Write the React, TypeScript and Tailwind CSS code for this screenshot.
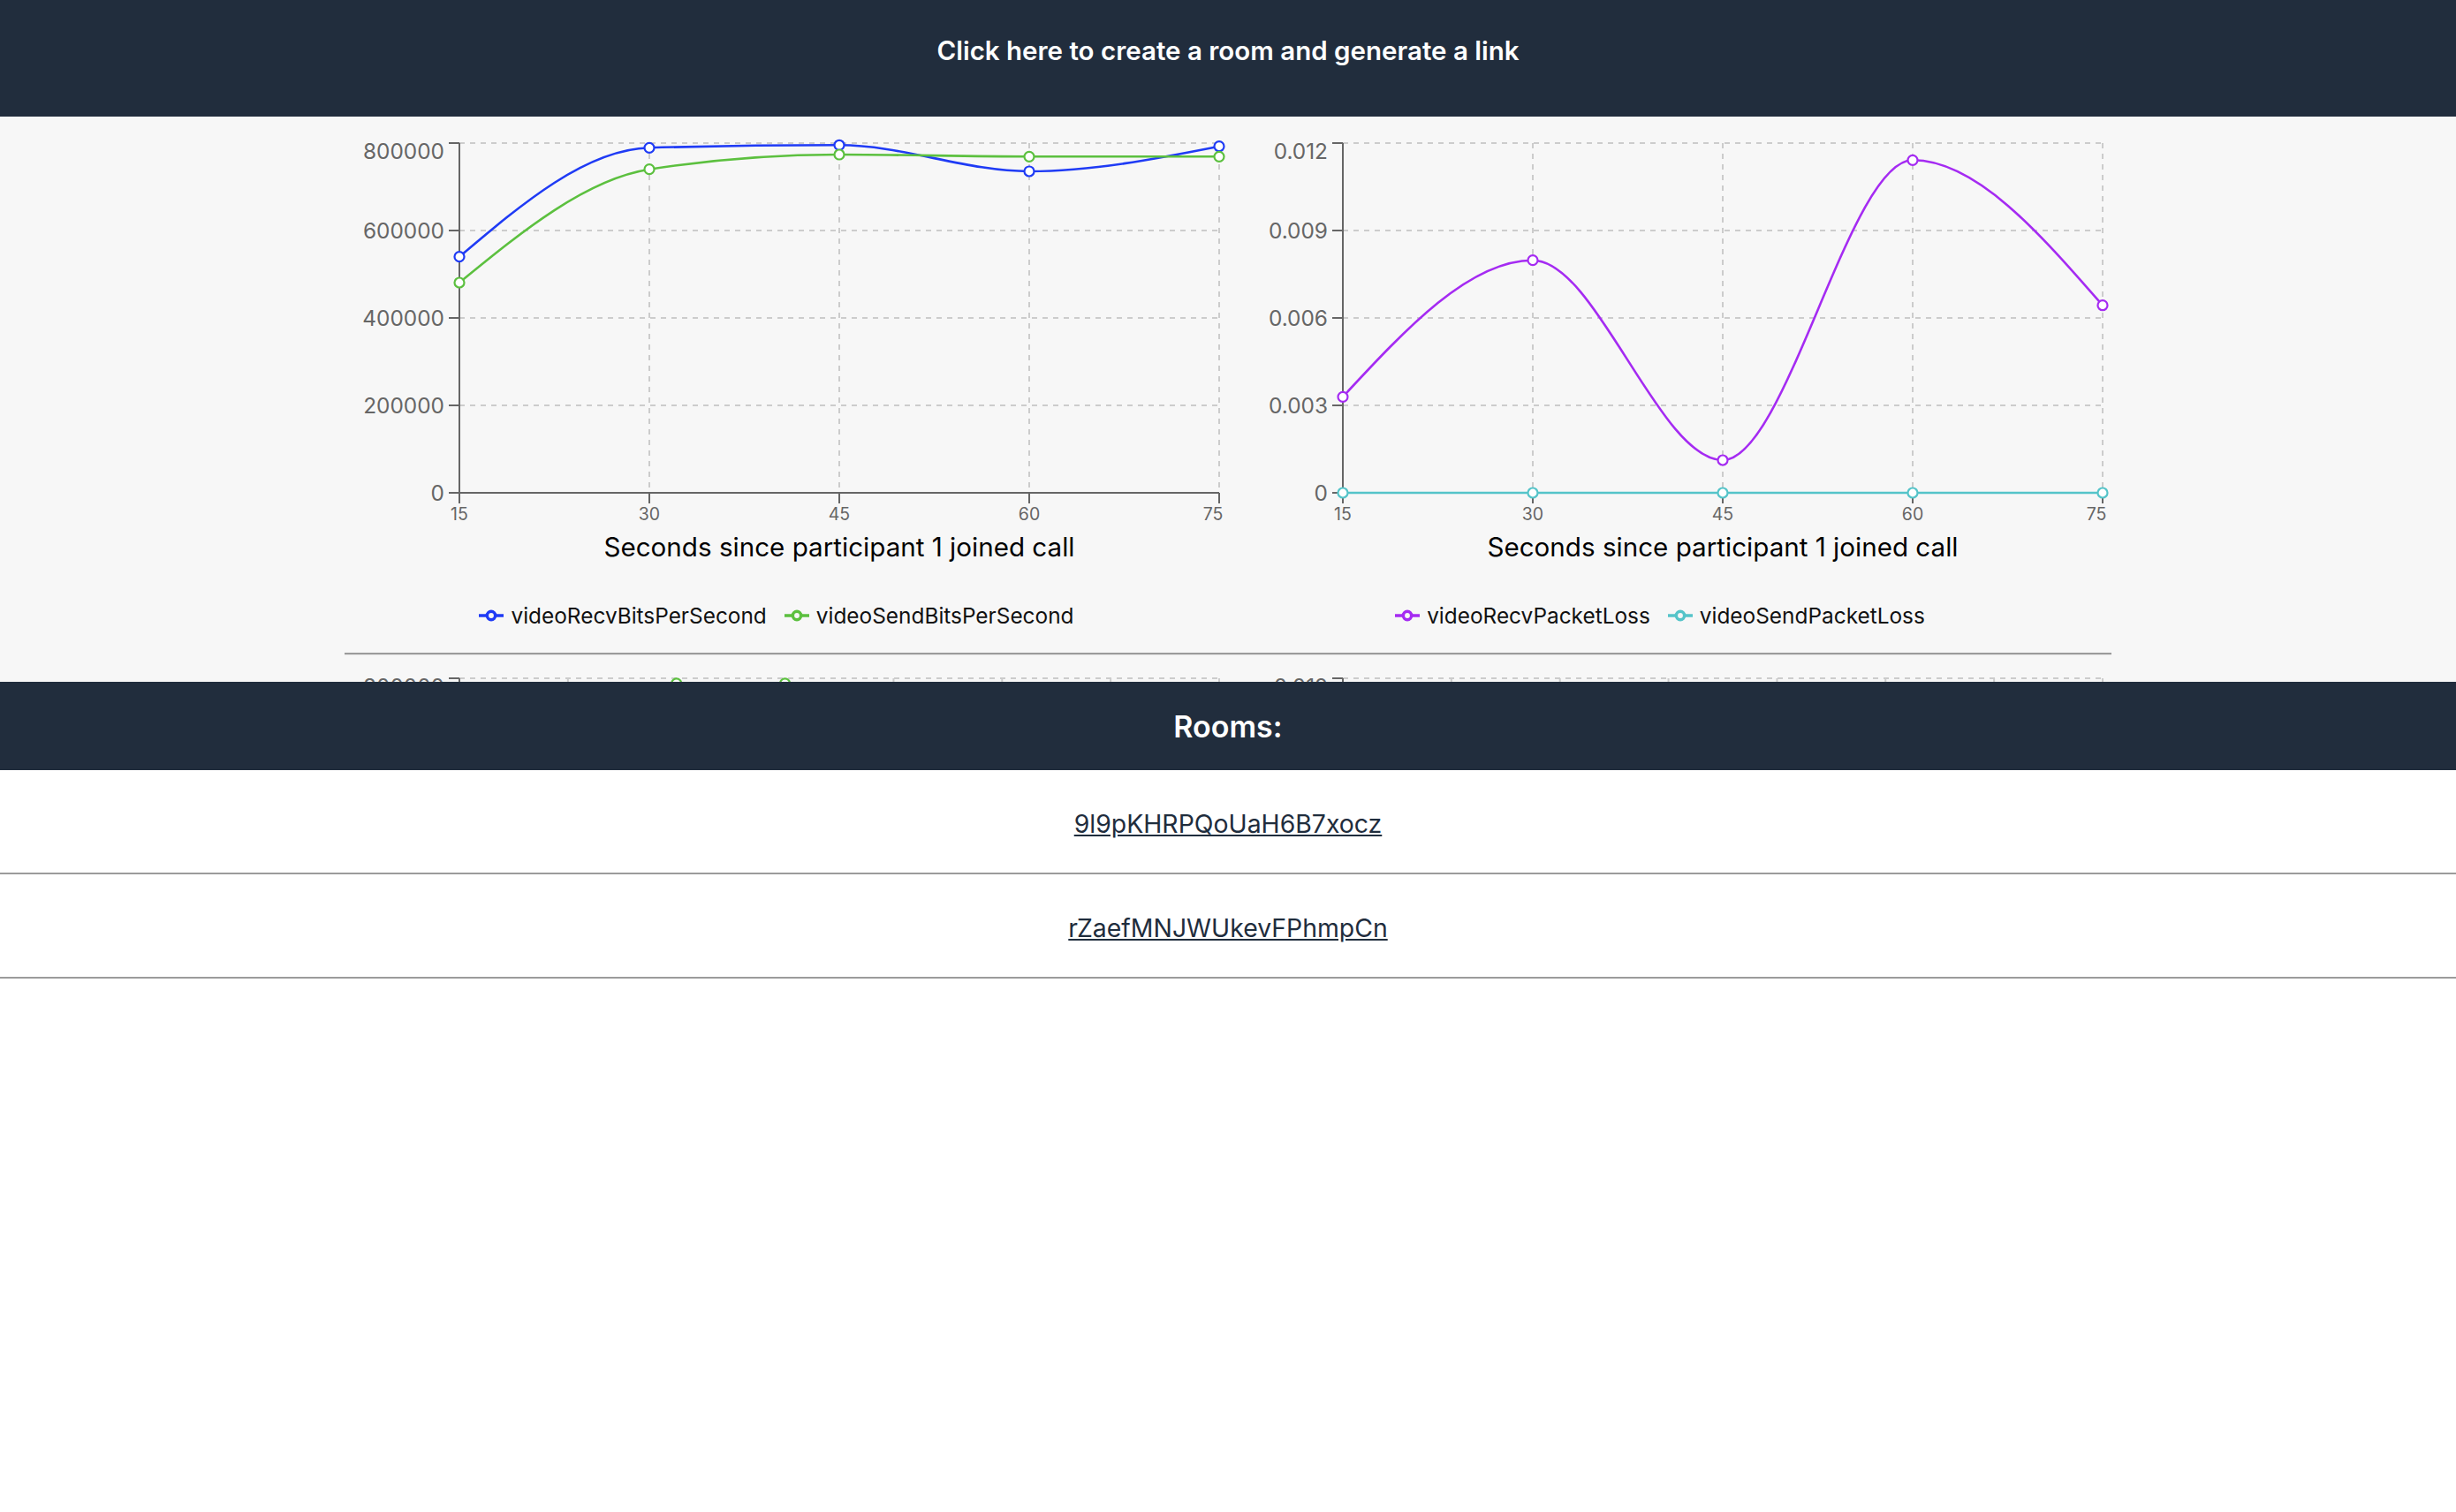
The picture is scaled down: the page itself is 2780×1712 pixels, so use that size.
import React from "react";

type Series = { name: string; color: string; values: number[] };
type ChartDef = {
  xLabels: string[];
  yLabels: string[];
  max: number;
  series: Series[];
};

const W = 1000;
const H = 539;
const PL = 130;
const PR = 990;
const PT = 20;
const PB = 416;

function monotonePath(pts: [number, number][]): string {
  const n = pts.length;
  if (n < 2) return "";
  if (n === 2) return `M${pts[0][0]},${pts[0][1]}L${pts[1][0]},${pts[1][1]}`;
  const secant: number[] = [];
  for (let i = 0; i < n - 1; i++) {
    const h = pts[i + 1][0] - pts[i][0];
    secant.push((pts[i + 1][1] - pts[i][1]) / h);
  }
  const sg = (x: number) => (x < 0 ? -1 : 1);
  const t: number[] = new Array(n).fill(0);
  for (let i = 1; i < n - 1; i++) {
    const h0 = pts[i][0] - pts[i - 1][0];
    const h1 = pts[i + 1][0] - pts[i][0];
    const s0 = secant[i - 1];
    const s1 = secant[i];
    const p = (s0 * h1 + s1 * h0) / (h0 + h1);
    t[i] = (sg(s0) + sg(s1)) * Math.min(Math.abs(s0), Math.abs(s1), 0.5 * Math.abs(p)) || 0;
  }
  t[0] = (3 * secant[0] - t[1]) / 2;
  t[n - 1] = (3 * secant[n - 2] - t[n - 2]) / 2;
  let d = `M${pts[0][0]},${pts[0][1]}`;
  for (let i = 0; i < n - 1; i++) {
    const [x0, y0] = pts[i];
    const [x1, y1] = pts[i + 1];
    const dx = (x1 - x0) / 3;
    d += `C${x0 + dx},${y0 + dx * t[i]},${x1 - dx},${y1 - dx * t[i + 1]},${x1},${y1}`;
  }
  return d;
}

function LegendIcon({ color }: { color: string }) {
  return (
    <svg width="28" height="28" viewBox="0 0 32 32" className="mr-[8px] shrink-0">
      <path
        strokeWidth="4"
        fill="none"
        stroke={color}
        d="M0,16h10.666666666666666A5.333333333333333,5.333333333333333,0,1,1,21.333333333333332,16H32M21.333333333333332,16A5.333333333333333,5.333333333333333,0,1,1,10.666666666666666,16"
      />
    </svg>
  );
}

function Chart({ def }: { def: ChartDef }) {
  const n = def.xLabels.length;
  const xAt = (i: number) => PL + (i * (PR - PL)) / (n - 1);
  const yAt = (v: number) => PB - (v / def.max) * (PB - PT);
  const yTicks = def.yLabels.map((_, k) => PB - (k * (PB - PT)) / (def.yLabels.length - 1));
  return (
    <div className="w-[1000px] flex flex-col">
      <svg width={W} height={H} fontFamily="Inter, 'Noto Sans', sans-serif" className="block">
        {yTicks.map((y, k) => (
          <line key={"hg" + k} x1={PL} x2={PR} y1={y} y2={y} stroke="#cccccc" strokeWidth="2" strokeDasharray="6 6" />
        ))}
        {def.xLabels.map((_, i) => (
          <line key={"vg" + i} x1={xAt(i)} x2={xAt(i)} y1={PT} y2={PB} stroke="#cccccc" strokeWidth="2" strokeDasharray="6 6" />
        ))}
        <line x1={PL} x2={PL} y1={PT} y2={PB} stroke="#666666" strokeWidth="2" />
        <line x1={PL} x2={PR} y1={PB} y2={PB} stroke="#666666" strokeWidth="2" />
        {yTicks.map((y, k) => (
          <g key={"yt" + k}>
            <line x1={PL - 12} x2={PL} y1={y} y2={y} stroke="#666666" strokeWidth="2" />
            <text
              x={PL - 17}
              y={k === yTicks.length - 1 ? y + 17.5 : y + 8.5}
              textAnchor="end"
              fill="#666666"
              fontSize="24.4"
            >
              {def.yLabels[k]}
            </text>
          </g>
        ))}
        {def.xLabels.map((lab, i) => (
          <g key={"xt" + i}>
            <line x1={xAt(i)} x2={xAt(i)} y1={PB} y2={PB + 12} stroke="#666666" strokeWidth="2" />
            <text
              x={i === n - 1 ? xAt(i) - 7 : xAt(i)}
              y={447}
              textAnchor="middle"
              fill="#666666"
              fontSize="19.5"
            >
              {lab}
            </text>
          </g>
        ))}
        <text x={(PL + PR) / 2} y={488} textAnchor="middle" fill="#000000" fontSize="29.6">
          Seconds since participant 1 joined call
        </text>
        {def.series.map((s) => {
          const pts: [number, number][] = s.values.map((v, i) => [xAt(i), yAt(v)]);
          return (
            <g key={s.name}>
              <path d={monotonePath(pts)} fill="none" stroke={s.color} strokeWidth="2.6" />
              {pts.map(([x, y], i) => (
                <circle key={i} cx={x} cy={y} r="5.5" fill="#ffffff" stroke={s.color} strokeWidth="2.2" />
              ))}
            </g>
          );
        })}
      </svg>
      <div className="h-[32px] flex items-center justify-center gap-[20px] pr-[22px]">
        {def.series.map((s) => (
          <div key={s.name} className="flex items-center">
            <LegendIcon color={s.color} />
            <span className="text-[24.4px] leading-[32px] text-[#111111]">{s.name}</span>
          </div>
        ))}
      </div>
    </div>
  );
}

const BLUE = "#1f3bf5";
const GREEN = "#5cc03f";
const PURPLE = "#a52bf2";
const TEAL = "#55c4c9";

const bitsLabels = ["0", "200000", "400000", "600000", "800000"];
const lossLabels = ["0", "0.003", "0.006", "0.009", "0.012"];

const row1: ChartDef[] = [
  {
    xLabels: ["15", "30", "45", "60", "75"],
    yLabels: bitsLabels,
    max: 800000,
    series: [
      { name: "videoRecvBitsPerSecond", color: BLUE, values: [540000, 789300, 795400, 735400, 792500] },
      { name: "videoSendBitsPerSecond", color: GREEN, values: [480800, 740000, 773700, 769100, 769100] },
    ],
  },
  {
    xLabels: ["15", "30", "45", "60", "75"],
    yLabels: lossLabels,
    max: 0.012,
    series: [
      { name: "videoRecvPacketLoss", color: PURPLE, values: [0.003294, 0.007979, 0.001121, 0.011415, 0.006433] },
      { name: "videoSendPacketLoss", color: TEAL, values: [0, 0, 0, 0, 0] },
    ],
  },
];

const row2: ChartDef[] = [
  {
    xLabels: ["15", "30", "45", "60", "75", "90", "105", "120"],
    yLabels: bitsLabels,
    max: 800000,
    series: [
      { name: "videoRecvBitsPerSecond", color: BLUE, values: [510000, 700000, 740000, 735000, 750000, 730000, 755000, 745000] },
      { name: "videoSendBitsPerSecond", color: GREEN, values: [470000, 690000, 788000, 788000, 760000, 770000, 755000, 765000] },
    ],
  },
  {
    xLabels: ["15", "30", "45", "60", "75", "90", "105", "120"],
    yLabels: lossLabels,
    max: 0.012,
    series: [
      { name: "videoRecvPacketLoss", color: PURPLE, values: [0.002, 0.006, 0.004, 0.009, 0.003, 0.007, 0.005, 0.004] },
      { name: "videoSendPacketLoss", color: TEAL, values: [0, 0, 0, 0, 0, 0, 0, 0] },
    ],
  },
];

const rooms = ["9l9pKHRPQoUaH6B7xocz", "rZaefMNJWUkevFPhmpCn"];

export default function App() {
  return (
    <div className="min-h-screen bg-white font-['Inter','Noto_Sans',sans-serif]">
      <header className="h-[132px] bg-[#212d3d] text-center">
        <button className="mt-[38px] text-[29.5px] leading-[38px] font-semibold text-white">
          Click here to create a room and generate a link
        </button>
      </header>
      <div className="h-[640px] overflow-hidden bg-[#f7f7f7]">
        <div className="w-[2000px] mx-auto">
          <div className="pt-[10px] flex">
            {row1.map((c, i) => (
              <Chart key={i} def={c} />
            ))}
          </div>
          <div className="mt-[26px] border-t-2 border-t-[#9b9b9b] border-b border-b-[#e6e6e6]" />
          <div className="pt-[6px] flex">
            {row2.map((c, i) => (
              <Chart key={i} def={c} />
            ))}
          </div>
        </div>
      </div>
      <div className="h-[100px] bg-[#212d3d] flex items-center justify-center">
        <h2 className="text-[34px] font-semibold text-white">Rooms:</h2>
      </div>
      <div>
        {rooms.map((r) => (
          <div key={r} className="pt-[41px] pb-[35px] text-center border-b-2 border-b-[#9b9b9b]">
            <a href="#" className="text-[28.4px] leading-[40px] text-[#1f2d3d] underline">
              {r}
            </a>
          </div>
        ))}
      </div>
    </div>
  );
}
